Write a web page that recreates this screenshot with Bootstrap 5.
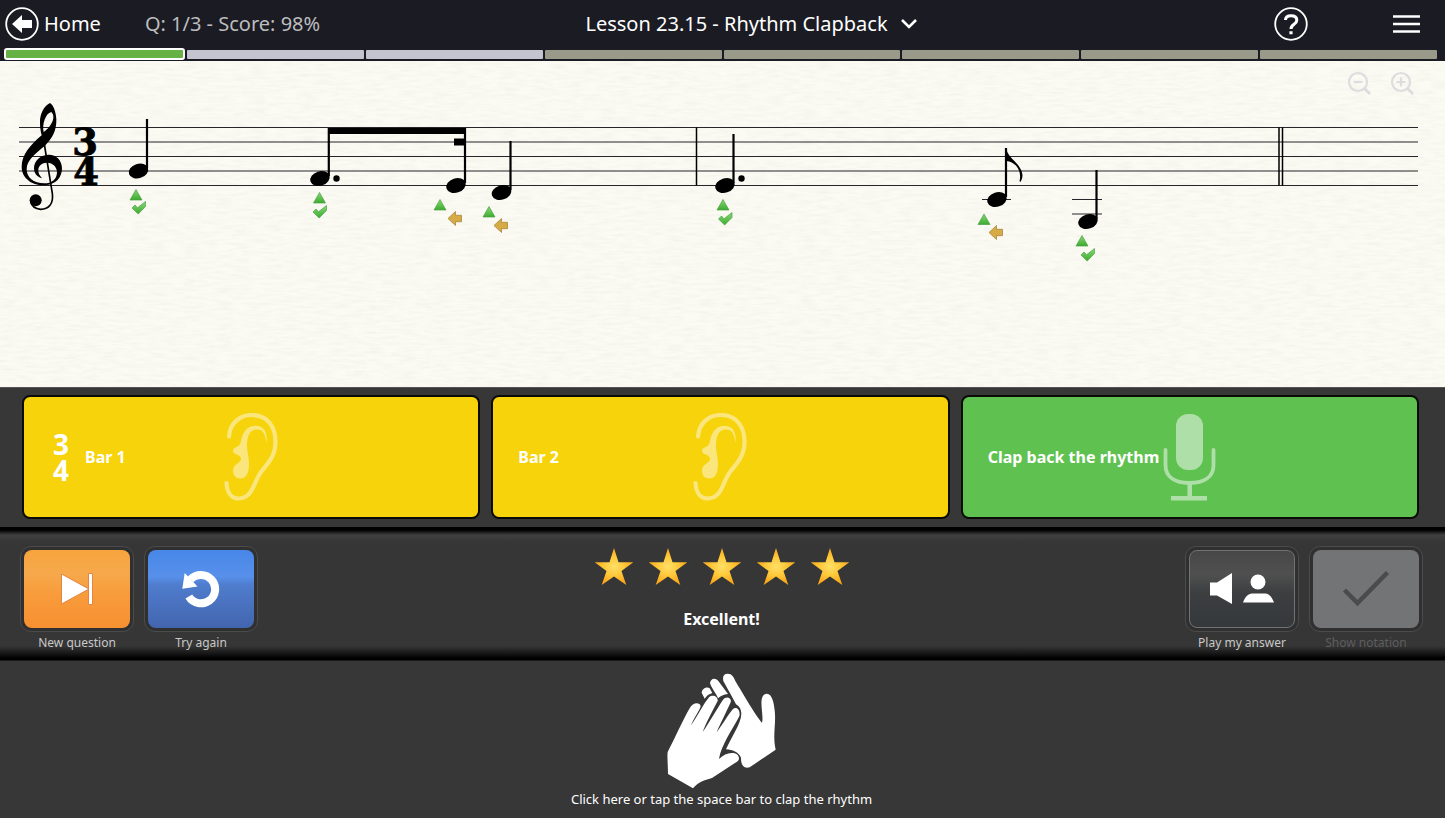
<!DOCTYPE html>
<html lang="en">
<head>
<meta charset="utf-8">
<meta name="viewport" content="width=device-width, initial-scale=1">
<title>Lesson 23.15 - Rhythm Clapback</title>
<link href="https://cdn.jsdelivr.net/npm/bootstrap@5.3.0/dist/css/bootstrap.min.css" rel="stylesheet">
<style>
  body { font-family: "Noto Sans", "Open Sans", sans-serif; background: #373737; color: #fff; }
  svg { display: block; }
  button, a { color: inherit; }
  .plain { background: none; border: 0; padding: 0; color: inherit; text-decoration: none; }
  .topbar { background: #1b1b23; height: 61px; }
  .top-row { height: 48px; font-size: 20px; padding: 0 25px 0 5px; grid-template-columns: 1fr auto 1fr; }
  .top-row .home { gap: 5px; }
  .top-row .lesson { padding-left: 78px; gap: 12px; }
  .score { color: #bdbdbf; margin-left: 44px; }
  .right-tools { gap: 85px; }
  .steps { padding: 1px 8px 0 4px; gap: 2px; }
  .steps li { flex: 1 1 0; height: 9px; border-radius: 1px; background: #999a89; margin-top: 1px; }
  .steps li.open { background: #c4c4d0; }
  .steps li.done { background: #66b244; border: 2px solid #fff; border-radius: 3px; height: 12px; margin: -1px 0 0 0; }
  .sheet { background: #fbfbf4; }
  .sheet svg.score-svg { width: 100%; height: auto; }
  .zoom-tools { top: 10px; right: 30px; gap: 18px; }
  .cards { padding: 7px 26px 8px 22px; gap: 11px; border-top: 1px solid #555; }
  .bar-btn { height: 124px; border: 2px solid #0b0b06; border-radius: 8px; padding: 0 25px; font-size: 16px; font-weight: 700; }
  .bar-btn > * { grid-area: 1 / 1; }
  .bar-btn.listen { background: #f6d30a; }
  .bar-btn.clap { background: #5fc250; }
  .meter { font-size: 28px; line-height: 26px; margin: 0 16px 0 4px; }
  .controls { height: 134px; padding: 19px 22px 0 20px; background: linear-gradient(#000 0, #000 3px, #404040 8px, #363636 15px, #363636 119px, #101010 128px, #000 131px, #000 133px, #373737 134px); }
  .ctl-group { gap: 10px; }
  .ctl { width: 114px; font-size: 12px; color: #c8c8c8; }
  .ctl .frame { display: block; height: 86px; padding: 3px; border: 1px solid #4b4b4b; border-radius: 11px; background: #303030; }
  .ctl .face { display: flex; align-items: center; justify-content: center; height: 78px; border-radius: 8px; }
  .ctl .cap { display: block; line-height: 16px; margin-top: 3px; }
  .orange { background: linear-gradient(#f7a43d, #f6a94b 30%, #f89c3c 55%, #f79030); }
  .blue { background: linear-gradient(#4787e8, #5790ea 34%, #4f7ccd 45%, #4365ae); }
  .dark { background: linear-gradient(#474747, #505050 30%, #3c3e40 55%, #35393c); border: 1px solid #727272; }
  .off { background: #737476; }
  .ctl:disabled { color: #5e5e5e; }
  .stars { gap: 16px; margin-top: 1px; }
  .verdict { font-size: 16px; line-height: 24px; font-weight: 700; margin-top: 20px; }
  .clap-zone { background: #373737; font-size: 13px; padding: 12px 0 8px; }
  .clap-zone .words { line-height: 20px; margin-right: 2px; }
  .clap-zone svg { margin-right: 2px; }
</style>
</head>
<body class="min-vh-100 d-flex flex-column">
<svg width="0" height="0" class="position-absolute" aria-hidden="true">
  <defs>
    <linearGradient id="gr" x1="0" y1="0" x2="0" y2="1"><stop offset="0" stop-color="#86da76"/><stop offset="1" stop-color="#3cab2e"/></linearGradient>
    <radialGradient id="gold"><stop offset="0" stop-color="#ffe06a"/><stop offset=".5" stop-color="#ffc93a"/><stop offset="1" stop-color="#fba51a"/></radialGradient>
    <filter id="grain" x="0" y="0" width="100%" height="100%">
      <feTurbulence type="fractalNoise" baseFrequency="0.06 0.35" numOctaves="3" seed="4"/>
      <feColorMatrix values="0 0 0 0 .66  0 0 0 0 .66  0 0 0 0 .56  .36 0 0 0 -.13"/>
    </filter>
    <ellipse id="head" rx="10" ry="7.2" transform="rotate(-18)"/>
    <path id="tri" d="M0,-5.5 L6,5 H-6Z" fill="url(#gr)" stroke="#4f9e49" stroke-width=".7"/>
    <path id="tick" d="M-7,1 L-4,-2 L-1.500,.8 L6.500,-5.500 V-.5 L-.8,7Z" fill="url(#gr)" stroke="#4f9e49" stroke-width=".7"/>
    <path id="early" d="M-7,0 L.5,-7 V-3.200 H6.500 V3.200 H.5 V7Z" fill="#d6ab45" stroke="#a9873c" stroke-width=".8"/>
    <path id="star" d="M19,0 L23.500,14.200 L38.500,14.200 L26.500,23 L31.300,37 L19,28.500 L6.700,37 L11.500,23 L-.5,14.200 L14.500,14.200Z" fill="url(#gold)"/>
    <g id="ear" fill="none" stroke="#fae67c" stroke-linecap="butt">
      <path d="M5,23.500 C6,10 16,2 28,2 C43,2 51.500,13 51.500,29 C51.500,43 44,50 37,59 C29,70 29,85 15,85.500 C7,85.500 3,79 2.500,70" stroke-width="4.200" stroke-linecap="round"/>
      <path d="M42.500,30 C41,22 40,16.500 33,16.500 C26,16.500 24,22 23,30 C22.500,38 25,43 25,51 C25,59 23,65 17,65.500 C11,65.500 9,62 9,57 C9,51 17,50 17,46 C17,41 9,42 9,38 C9,33.500 15,35 16.500,30 C18,22 21,13 31,12.800 C41,12.500 43.500,21 42.500,30Z" fill="#fae67c" stroke="none"/>
    </g>
  </defs>
</svg>

<header class="topbar">
  <nav class="top-row d-grid align-items-center" aria-label="Lesson">
    <div class="d-flex align-items-center">
      <a href="#" class="plain home d-flex align-items-center">
        <svg width="34" height="34" viewBox="0 0 34 34"><circle cx="17" cy="17" r="15.800" fill="none" stroke="#fff" stroke-width="1.800"/><path d="M7,17 L17,8 V13 H27 V21 H17 V26Z" fill="#fff"/></svg>
        <span>Home</span>
      </a>
      <span class="score">Q: 1/3 - Score: 98%</span>
    </div>
    <button type="button" class="plain lesson d-flex align-items-center" aria-haspopup="true">
      <span>Lesson 23.15 - Rhythm Clapback</span>
      <svg width="18" height="12" viewBox="0 0 18 12"><path d="M2,2 L9,9 L16,2" fill="none" stroke="#fff" stroke-width="2.600"/></svg>
    </button>
    <div class="right-tools d-flex justify-content-end align-items-center">
      <button type="button" class="plain" aria-label="Help"><svg width="34" height="34" viewBox="0 0 34 34"><circle cx="17" cy="17" r="15.800" fill="none" stroke="#fff" stroke-width="1.800"/><path d="M11.500,13 C11.500,10 14,8.800 17,8.800 C20.500,8.800 22.800,10.500 22.800,13.200 C22.800,17.500 17,17 17,22" fill="none" stroke="#fff" stroke-width="3"/><path d="M15.400,24.200h3.200v3h-3.200z" fill="#fff"/></svg></button>
      <button type="button" class="plain" aria-label="Menu"><svg width="27" height="20" viewBox="0 0 27 20"><path d="M0,2.500H27M0,10H27M0,17.500H27" stroke="#fff" stroke-width="2.400"/></svg></button>
    </div>
  </nav>
  <ol class="steps d-flex list-unstyled mb-0" aria-label="Progress">
    <li class="done"></li><li class="open"></li><li class="open"></li><li></li><li></li><li></li><li></li><li></li>
  </ol>
</header>

<main class="flex-grow-1 d-flex flex-column">
  <section class="sheet position-relative" aria-label="Notation">
    <svg class="score-svg" viewBox="0 61 1445 326">
      <rect y="61" width="1445" height="326" filter="url(#grain)"/>
      <g stroke="#25252a" stroke-width="1.200">
        <path d="M19,127.500H1418M19,142H1418M19,156.500H1418M19,171H1418M19,185.500H1418"/>
        <path d="M982,199.500H1011M1072,199.500H1102M1072,214H1102"/>
        <path d="M696.500,127.500V185.500M1279,127.500V185.500M1282.500,127.500V185.500" stroke="#000" stroke-width="1.500"/>
      </g>
      <!-- treble clef -->
      <g transform="scale(.33333)">
        <path fill-rule="evenodd" d="M150,309 C134,316 119,340 120,368 C120,382 122,394 125,406 C92,434 64,464 65,502 C66,536 97,558 135,556 C168,554 186,532 186,505 C186,480 168,463 145,464 C120,465 102,483 102,505 C102,521 113,532 126,535 C118,526 114,518 115,508 C116,497 127,487 142,488 C158,489 171,500 171,518 C170,538 155,550 133,550 C100,550 80,532 80,508 C80,478 110,458 135,437 C157,415 170,392 169,358 C168,336 160,314 150,309Z M154,336 C165,346 160,365 150,377 C144,386 138,390 131,396 C126,373 136,340 154,336Z"/>
        <path d="M128,402 L157,580 C161,612 146,628 122,628 C107,627 95,619 92,605" fill="none" stroke="#000" stroke-width="5"/>
        <circle cx="107" cy="601" r="18"/>
      </g>
      <g font-family="DejaVu Serif, serif" font-weight="700" font-size="37" text-anchor="middle" stroke="#000" stroke-width=".8"><text x="85" y="155">3</text><text x="86" y="185">4</text></g>
      <!-- note heads, then stems, beam and flag -->
      <use href="#head" transform="translate(138.500 171)"/>
      <use href="#head" transform="translate(320 178.500)"/>
      <use href="#head" transform="translate(456 185.500)"/>
      <use href="#head" transform="translate(501.500 192.500)"/>
      <use href="#head" transform="translate(725 185.500)"/>
      <use href="#head" transform="translate(997 199.500)"/>
      <use href="#head" transform="translate(1088 221.500)"/>
      <path d="M147,119V168M328.800,128V176M465,128V183M510.500,141V190M733.500,134V183M1006,148V197M1096.500,170V219" stroke="#000" stroke-width="2.200"/>
      <path d="M328,128H466V134H328ZM454,138.500H466V145.500H454Z"/>
      <path d="M1006,148 C1008,159 1021,163 1022.500,175 C1022.500,178 1021.500,180 1020.500,182 L1019.500,181 C1022,172 1017,162 1006,161Z"/>
      <circle cx="336.500" cy="178.500" r="3.200"/><circle cx="741.500" cy="178.500" r="3.200"/>
      <use href="#tri" x="136" y="195"/><use href="#tick" x="139" y="207"/>
      <use href="#tri" x="319.500" y="198"/><use href="#tick" x="320" y="211"/>
      <use href="#tri" x="440" y="205"/><use href="#early" x="455" y="218.500"/>
      <use href="#tri" x="489" y="212"/><use href="#early" x="501" y="225.500"/>
      <use href="#tri" x="723" y="205"/><use href="#tick" x="725.500" y="218"/>
      <use href="#tri" x="984" y="219.500"/><use href="#early" x="996" y="232.500"/>
      <use href="#tri" x="1082" y="241"/><use href="#tick" x="1088" y="254"/>
    </svg>
    <div class="zoom-tools position-absolute d-flex">
      <button type="button" class="plain" aria-label="Zoom out"><svg width="25" height="25" viewBox="0 0 25 25" fill="none" stroke="#dddddf" stroke-width="2.200"><circle cx="11" cy="11" r="9"/><path d="M6.500,11H15.500"/><path d="M17.500,17.500L23,23" stroke-width="3"/></svg></button>
      <button type="button" class="plain" aria-label="Zoom in"><svg width="25" height="25" viewBox="0 0 25 25" fill="none" stroke="#dddddf" stroke-width="2.200"><circle cx="11" cy="11" r="9"/><path d="M6.500,11H15.500M11,6.500V15.500"/><path d="M17.500,17.500L23,23" stroke-width="3"/></svg></button>
    </div>
  </section>

  <section class="cards d-flex" aria-label="Bars">
    <button type="button" class="bar-btn listen d-grid align-items-center w-100">
      <span class="d-flex align-items-center"><span class="meter d-flex flex-column"><span>3</span><span>4</span></span><span>Bar 1</span></span>
      <svg class="mx-auto" width="54" height="88" viewBox="0 0 54 88"><use href="#ear"/></svg>
    </button>
    <button type="button" class="bar-btn listen d-grid align-items-center w-100">
      <span class="text-start">Bar 2</span>
      <svg class="mx-auto" width="54" height="88" viewBox="0 0 54 88"><use href="#ear"/></svg>
    </button>
    <button type="button" class="bar-btn clap d-grid align-items-center w-100">
      <span class="text-start">Clap back the rhythm</span>
      <svg class="mx-auto" width="54" height="88" viewBox="0 0 54 88"><rect x="13" y="1" width="27" height="56" rx="12" fill="#afdfa8"/><path d="M2.500,37 V52 C2.500,64 12,70 26.500,70 C41,70 50.500,64 50.500,52 V37" fill="none" stroke="#afdfa8" stroke-width="3.800" stroke-linecap="round"/><path d="M24.500,70h4.500v13h15v4.500h-36v-4.500h16.500z" fill="#afdfa8"/></svg>
    </button>
  </section>

  <section class="controls d-flex justify-content-between align-items-start" aria-label="Answer">
    <div class="ctl-group d-flex">
      <button type="button" class="plain ctl">
        <span class="frame"><span class="face orange"><svg width="34" height="34" viewBox="0 0 34 34" fill="#fff" stroke="#e28545"><path d="M1.500,2 L29,17 L1.500,32Z"/><path d="M28.500,1.500h4v31h-4z"/></svg></span></span>
        <span class="cap">New question</span>
      </button>
      <button type="button" class="plain ctl">
        <span class="frame"><span class="face blue"><svg width="38" height="38" viewBox="0 0 38 38"><path d="M6.800,26.500 A14.200,14.200 0 1 0 8.500,9.500" fill="none" stroke="#fff" stroke-width="8"/><path d="M2.700,3 L.3,18.800 L15.500,16.500Z" fill="#fff"/></svg></span></span>
        <span class="cap">Try again</span>
      </button>
    </div>
    <div class="text-center">
      <div class="stars d-flex" role="img" aria-label="5 stars">
        <svg width="38" height="40" viewBox="0 -1 38 40"><use href="#star"/></svg>
        <svg width="38" height="40" viewBox="0 -1 38 40"><use href="#star"/></svg>
        <svg width="38" height="40" viewBox="0 -1 38 40"><use href="#star"/></svg>
        <svg width="38" height="40" viewBox="0 -1 38 40"><use href="#star"/></svg>
        <svg width="38" height="40" viewBox="0 -1 38 40"><use href="#star"/></svg>
      </div>
      <p class="verdict mb-0">Excellent!</p>
    </div>
    <div class="ctl-group d-flex">
      <button type="button" class="plain ctl">
        <span class="frame"><span class="face dark"><svg width="66" height="34" viewBox="0 0 66 34" fill="#fff"><path d="M1,10.500h7L23,1V32L8,23.500H1Z"/><circle cx="49" cy="10" r="7.500"/><path d="M34,30.500 C36,25 39,21.500 43,21.500H56C60,21.500 63,25 65,30.500Z"/></svg></span></span>
        <span class="cap">Play my answer</span>
      </button>
      <button type="button" class="plain ctl" disabled>
        <span class="frame"><span class="face off"><svg width="48" height="38" viewBox="0 0 48 38"><path d="M2.500,20 L15.500,33 L45.500,2.500" fill="none" stroke="#4b4b4c" stroke-width="4.500"/></svg></span></span>
        <span class="cap">Show notation</span>
      </button>
    </div>
  </section>

  <button type="button" class="plain clap-zone flex-grow-1 d-flex flex-column align-items-center">
    <svg width="110" height="116" viewBox="80 38 330 348" fill="#fff">
      <path d="M82,275 C100,240 130,175 148,144 C158,124 180,126 181,138 C178,150 160,175 152,195 C170,170 190,130 206,111 C218,100 234,110 232,122 C218,150 198,185 187,215 C208,185 230,145 248,118 C258,105 275,112 271,126 C258,155 240,190 229,216 C245,195 262,165 278,146 C290,137 301,150 297,168 C278,205 242,255 236,296 C250,282 264,276 280,278 C298,282 300,298 290,304 L215,353 C196,360 175,362 158,384 L83,341 C83,315 80,290 82,275Z"/>
      <path d="M262,40 C275,40 280,50 285,62 C310,103 345,165 365,187 C372,165 350,105 378,100 C395,98 401,128 403,150 C408,190 396,225 406,268 L328,321 C308,326 302,312 302,292 C294,275 277,268 257,267 C272,232 304,188 303,158 C301,143 296,138 287,132 C276,110 260,82 249,62 C246,48 250,40 262,40Z"/>
      <path d="M209,68 C211,54 224,50 234,62 L263,101 C250,102 240,108 233,114 C230,102 212,82 209,68Z"/>
      <path d="M184,97 C185,84 200,77 208,84 L216,98 C206,101 199,106 193,115Z"/>
    </svg>
    <span class="words">Click here or tap the space bar to clap the rhythm</span>
  </button>
</main>
<script src="https://cdn.jsdelivr.net/npm/bootstrap@5.3.0/dist/js/bootstrap.bundle.min.js"></script>
</body>
</html>
